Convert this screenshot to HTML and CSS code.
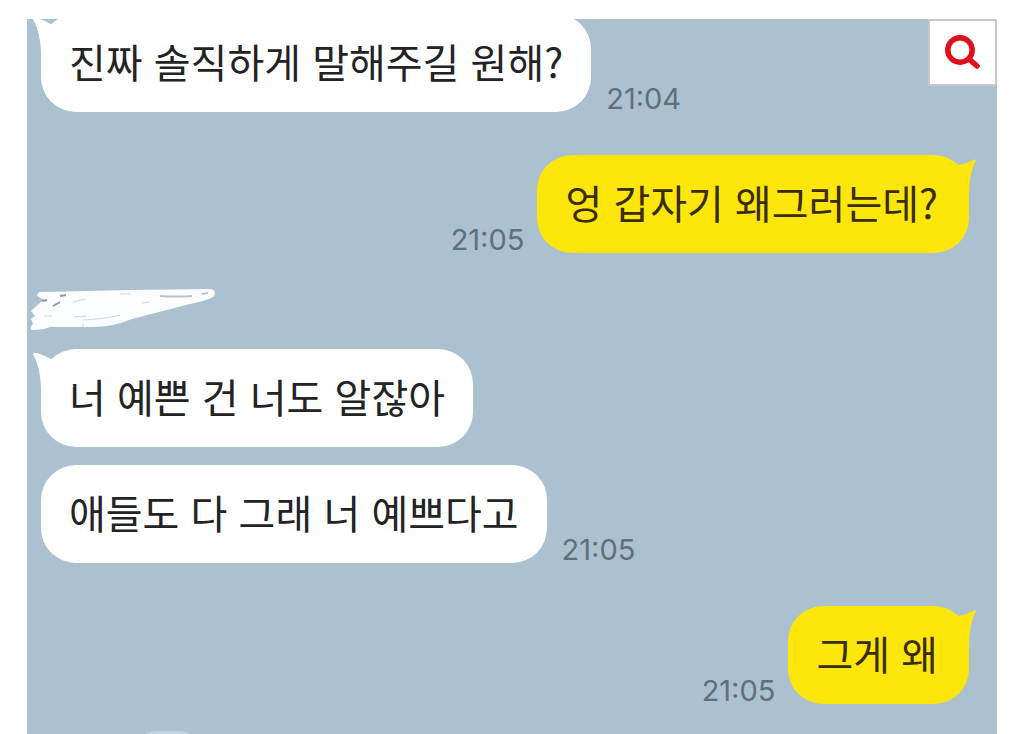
FILE: index.html
```
<!DOCTYPE html>
<html lang="ko">
<head>
  <meta charset="UTF-8">
  <meta name="viewport" content="width=device-width, initial-scale=1">
  <title>채팅</title>
  <link rel="stylesheet" href="styles.css">
</head>
<body>

<main class="chat">
  <button class="search" type="button" aria-label="검색">
    <svg width="38" height="38" viewBox="0 0 38 38">
      <circle cx="16" cy="16" r="12.2" />
      <path d="M25 25 L33 32" />
    </svg>
  </button>

  <div class="message first">
    <div class="bubble">
      <svg class="tail" width="46" height="42" viewBox="0 0 46 42"><path d="M1 5 Q2 3 5 4 Q11 6 19 10 L42 38 L9 40 Q9 20 1 5 Z" /></svg>
      진짜 솔직하게 말해주길 원해?
    </div>
    <time>21:04</time>
  </div>

  <div class="message mine">
    <div class="bubble">
      <svg class="tail" width="46" height="42" viewBox="0 0 46 42"><path d="M2 5 Q3 4 5 5 Q12 9 19 10 L42 38 L9 40 Q9 18 2 5 Z" /></svg>
      엉 갑자기 왜그러는데?
    </div>
    <time>21:05</time>
  </div>

  <div class="group">
    <!-- scribbled out name -->
    <svg class="name" width="188" height="42" viewBox="0 0 188 42">
      <path class="ink" d="M9 3 Q60 2 100 1 L180 0 Q187 1 184 7 Q180 11 160 15 L102 30 Q82 38 64 38 L20 38 Q14 41 2 41 Q-1 39 3 35 L1 30 L5 27 L1 22 Q10 14 14 10 Q8 9 7 6 Z" />
      <path class="mark" d="M130 7 Q145 8 162 7 M172 5 l6 -1" />
      <path class="mark thin" d="M53 31 Q75 30 90 26 M44 28 l12 -1 M43 13 l12 -3 M112 14 l8 -1 M90 5 l10 0 M53 34 l0 6 M14 27 l8 0" />
      <path class="mark dark" d="M12 12 l5 -1 M23 17 l7 -4 M30 7 l6 -1" />
    </svg>
    <div class="message">
      <div class="bubble">
        <svg class="tail" width="46" height="42" viewBox="0 0 46 42"><path d="M1 5 Q2 3 5 4 Q11 6 19 10 L42 38 L9 40 Q9 20 1 5 Z" /></svg>
        너 예쁜 건 너도 알잖아
      </div>
    </div>
    <div class="message">
      <div class="bubble">애들도 다 그래 너 예쁘다고</div>
      <time>21:05</time>
    </div>
  </div>

  <div class="message mine">
    <div class="bubble">
      <svg class="tail" width="46" height="42" viewBox="0 0 46 42"><path d="M2 5 Q3 4 5 5 Q12 9 19 10 L42 38 L9 40 Q9 18 2 5 Z" /></svg>
      그게 왜
    </div>
    <time>21:05</time>
  </div>

  <svg class="next-name" width="188" height="4" viewBox="0 0 188 4">
    <path d="M114 4 Q120 1 130 1 L150 1 Q158 2 160 4 Z" />
  </svg>
</main>

</body>
</html>
```

FILE: styles.css
```
*, *::before, *::after {
  box-sizing: border-box;
}

body {
  margin: 0;
  padding: 19px 27px 0;
  background: #fff;
  font-family: "Noto Sans CJK KR", sans-serif;
}

.chat {
  position: relative;
  display: flex;
  flex-direction: column;
  gap: 43px;
  min-height: calc(100vh - 19px);
  padding: 0 28px 0 14px;
  background: #abc1cf;
  overflow: hidden;
}

.search {
  position: absolute;
  top: 0;
  right: 0;
  display: flex;
  align-items: center;
  justify-content: center;
  width: 69px;
  height: 67px;
  padding: 0;
  border: 2px solid #c6c8ca;
  background: #fff;
  cursor: pointer;
}

.search svg {
  fill: none;
  stroke: #e0101a;
  stroke-width: 5.5;
  stroke-linecap: round;
}

.message {
  display: flex;
  align-items: flex-end;
  gap: 15px;
}

.message.first {
  margin-top: -5px;
}

.message.mine {
  flex-direction: row-reverse;
  gap: 13px;
}

.bubble {
  position: relative;
  padding: 18px 28px 22px;
  border-radius: 35px;
  background: #fff;
  color: #232325;
  font-size: 40px;
  line-height: 58px;
}

.mine .bubble {
  padding-right: 31px;
  background: #fde60a;
  color: #3a2c04;
}

.tail {
  position: absolute;
  top: 0;
  left: -9px;
  fill: #fff;
}

.mine .tail {
  left: auto;
  right: -9px;
  fill: #fde60a;
  transform: scaleX(-1);
}

time {
  color: #5f6f7d;
  font-family: Inter, sans-serif;
  font-size: 29px;
  line-height: 27px;
}

.group {
  display: flex;
  flex-direction: column;
  gap: 18px;
  margin-top: -7px;
}

.name,
.next-name {
  margin-left: -11px;
}

.name .ink {
  fill: #fbfdfe;
}

.mark {
  fill: none;
  stroke: #b9c3ca;
  stroke-width: 2;
}

.mark.thin {
  stroke: #cfd6da;
  stroke-width: 1;
}

.mark.dark {
  stroke: #8e979c;
}

.next-name {
  margin-top: -17px;
  fill: #c3d3dd;
}
```
